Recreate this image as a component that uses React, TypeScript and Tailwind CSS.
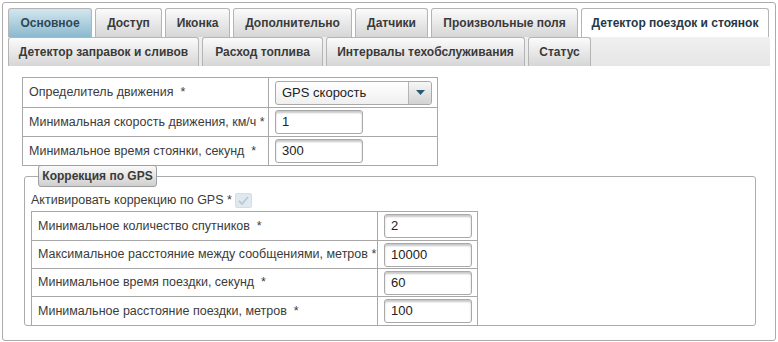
import React from "react";

type Tab = { label: string; w: string; kind?: "active" | "selected" };

const row1: Tab[] = [
  { label: "Основное", w: "w-[84px]", kind: "active" },
  { label: "Доступ", w: "w-[67px]" },
  { label: "Иконка", w: "w-[65px]" },
  { label: "Дополнительно", w: "w-[119px]" },
  { label: "Датчики", w: "w-[73px]" },
  { label: "Произвольные поля", w: "w-[147px]" },
  { label: "Детектор поездок и стоянок", w: "w-[188px]", kind: "selected" },
];

const row2: Tab[] = [
  { label: "Детектор заправок и сливов", w: "w-[191px]" },
  { label: "Расход топлива", w: "w-[121px]" },
  { label: "Интервалы техобслуживания", w: "w-[199px]" },
  { label: "Статус", w: "w-[63px]" },
];

const TabItem = ({ tab }: { tab: Tab }) => {
  let look = "bg-gradient-to-b from-[#fbfbfb] to-[#d6d6d6] text-[#3a3a3a]";
  if (tab.kind === "active") look = "bg-gradient-to-b from-[#d3e6ee] to-[#8bb9cf] text-[#2f4756]";
  if (tab.kind === "selected") look = "bg-white text-[#263845]";
  return (
    <div
      className={`${tab.w} ${look} h-[29px] shrink-0 border border-b-0 border-[#b4b4b4] rounded-t-[3px] flex items-center justify-center text-[12px] font-bold`}
    >
      {tab.label}
    </div>
  );
};

const Input = ({ value }: { value: string }) => (
  <div className="w-[88px] h-[24px] border border-[#a9a9a9] rounded-[3px] bg-white shadow-[inset_0_2px_2px_rgba(0,0,0,0.22)] flex items-center pl-[6px] text-[13px] text-[#222]">
    {value}
  </div>
);

const Row = ({ label, children, h, lw }: { label: string; children: React.ReactNode; h: string; lw: string }) => (
  <tr className={h}>
    <td className={`${lw} border border-[#a8a8a8] pl-[6px] pr-0 text-[12.5px] text-[#3b3b3b] whitespace-pre`}>{label}</td>
    <td className="border border-[#a8a8a8] pl-[6px]">{children}</td>
  </tr>
);

export default function App() {
  return (
    <div className="w-[778px] h-[342px] bg-white pt-[2px] pl-[2px] font-['Liberation_Sans',Arial,sans-serif]">
      <div className="w-[774px] h-[339px] border border-[#ababab] rounded-[3px] bg-white pt-[5px] pl-[5px] pr-[5px]">
        <div className="flex gap-[3px]">
          {row1.map((t) => (
            <TabItem key={t.label} tab={t} />
          ))}
        </div>
        <div className="flex gap-[3px] bg-gradient-to-b from-[#f0f0f0] to-[#e6e6e6] w-[762px]">
          {row2.map((t) => (
            <TabItem key={t.label} tab={t} />
          ))}
        </div>

        <div className="pl-[14px] pt-[11px]">
          <table className="border-collapse table-fixed w-[416px]">
            <tbody>
              <Row label="Определитель движения  *" h="h-[30px]" lw="w-[246px]">
                <div className="w-[157px] h-[24px] border border-[#a9a9a9] rounded-[3px] bg-gradient-to-b from-white to-[#efefef] flex items-center text-[13px] text-[#222]">
                  <span className="flex-1 pl-[6px]">GPS скорость</span>
                  <span className="w-[23px] h-full border-l border-[#b5b5b5] rounded-r-[3px] bg-gradient-to-b from-[#f7f7f7] to-[#d2d2d2] flex items-center justify-center">
                    <svg width="9" height="5" viewBox="0 0 9 5">
                      <path d="M0 0h9L4.5 5z" fill="#2c5a72" />
                    </svg>
                  </span>
                </div>
              </Row>
              <Row label="Минимальная скорость движения, км/ч *" h="h-[29px]" lw="w-[246px]">
                <Input value="1" />
              </Row>
              <Row label="Минимальное время стоянки, секунд  *" h="h-[29px]" lw="w-[246px]">
                <Input value="300" />
              </Row>
            </tbody>
          </table>

          <fieldset className="ml-[2px] w-[732px] h-[161px] border border-[#ababab] rounded-[3px] px-[6px] -mt-[1px]">
            <legend className="ml-[7px] w-[119px] h-[22px] border border-[#9f9f9f] rounded-[3px] bg-gradient-to-b from-[#fafafa] to-[#cfcfcf] flex items-center justify-center text-[12px] font-bold text-[#3a3a3a]">
              Коррекция по GPS
            </legend>
            <div className="flex items-center h-[23px] mt-[2px] text-[12.5px] text-[#3b3b3b]">
              <span>Активировать коррекцию по GPS *</span>
              <span className="ml-[3px] w-[17px] h-[15px] rounded-[2px] bg-[#dfe9ef] border border-[#d3dee6] flex items-center justify-center">
                <svg width="11" height="9" viewBox="0 0 11 9">
                  <path d="M1 5l3 3 6-7" stroke="#b9c9d3" strokeWidth="1.8" fill="none" />
                </svg>
              </span>
            </div>
            <table className="border-collapse table-fixed w-[447px] -mt-[1px]">
              <tbody>
                <Row label="Минимальное количество спутников  *" h="h-[29px]" lw="w-[346px]">
                  <Input value="2" />
                </Row>
                <Row label="Максимальное расстояние между сообщениями, метров *" h="h-[28px]" lw="w-[346px]">
                  <Input value="10000" />
                </Row>
                <Row label="Минимальное время поездки, секунд  *" h="h-[28px]" lw="w-[346px]">
                  <Input value="60" />
                </Row>
                <Row label="Минимальное расстояние поездки, метров  *" h="h-[29px]" lw="w-[346px]">
                  <Input value="100" />
                </Row>
              </tbody>
            </table>
          </fieldset>
        </div>
      </div>
    </div>
  );
}
